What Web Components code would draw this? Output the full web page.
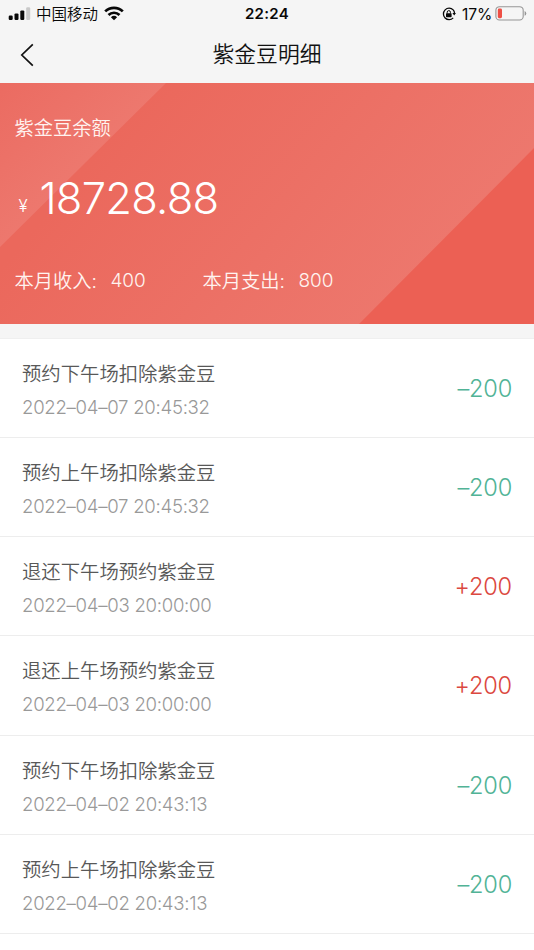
<!DOCTYPE html>
<html lang="zh-CN">
<head>
<meta charset="utf-8">
<title>紫金豆明细</title>
<style>
html, body { margin: 0; height: 100%; }
body { background: #fff; font-family: Inter, "Noto Sans CJK SC DemiLight", "Noto Sans CJK SC", sans-serif; overflow: hidden; }
</style>
</head>
<body>
<bean-page></bean-page>
<script>
const define = (name, html) => customElements.define(name, class extends HTMLElement {
  constructor() {
    super();
    this.attachShadow({ mode: 'open' }).innerHTML = html;
  }
});

define('status-bar', `
<style>
:host { display: grid; grid-template-columns: 1fr auto 1fr; align-items: center; height: 27px; color: #080808; font-size: 15px; line-height: 27px; }
.side { display: flex; align-items: center; height: 27px; }
.left { padding-left: 8px; }
.carrier { font-size: 15.5px; margin: 1px 6px 0 5px; }
.right { justify-content: flex-end; padding-right: 7px; }
.time { font-weight: 600; letter-spacing: .3px; }
.pct { margin: 1px 3px 0 6px; font-size: 15.6px; letter-spacing: -.2px; }
svg { display: block; flex: none; }
</style>
<div class="side left">
  <svg width="23" height="14" viewBox="0 0 23 14"><g fill="#080808"><rect x=".7" y="8.5" width="4" height="4.5" rx="1.2"/><rect x="6.5" y="6.4" width="4" height="6.6" rx="1.2"/><rect x="12.3" y="3.4" width="4" height="9.6" rx="1.2"/></g><rect x="18.2" y=".3" width="4" height="12.7" rx="1.2" fill="#c9c9c9"/></svg>
  <span class="carrier">中国移动</span>
  <svg width="20" height="15" viewBox="0 0 20 15"><g fill="none" stroke="#080808" stroke-width="2.7"><path d="M1.2 5.4a12.5 12.5 0 0 1 17.6 0"/><path d="M4.5 9a7.8 7.8 0 0 1 11 0"/></g><path d="M10 14.2 6.9 11.2a4.5 4.5 0 0 1 6.2 0z" fill="#080808"/></svg>
</div>
<span class="time">22:24</span>
<div class="side right">
  <svg width="14" height="14" viewBox="0 0 14 14"><path d="M11.2 2.9A5.7 5.7 0 1 0 11.2 10.9M11.2 2.9A5.7 5.7 0 0 1 12.5 6" fill="none" stroke="#080808" stroke-width="1.3"/><path d="M10.4 5.9h3.6l-1.8 2.7z" fill="#080808"/><rect x="4" y="6.2" width="5.6" height="4" rx=".6" fill="#080808"/><path d="M5.2 6.5V5.2a1.6 1.6 0 0 1 3.2 0v1.3" fill="none" stroke="#080808" stroke-width="1"/></svg>
  <span class="pct">17%</span>
  <svg width="32" height="15" viewBox="0 0 32 15"><rect x=".9" y=".7" width="27.3" height="13.3" rx="3.6" fill="none" stroke="#969696" stroke-width="1.1"/><rect x="2.8" y="2.6" width="4.2" height="9.6" rx="1.4" fill="#ee4f45"/><path d="M29.6 5v4.8q1.7-.6 1.7-2.4T29.6 5z" fill="#969696"/></svg>
</div>`);

define('nav-bar', `
<style>
:host { display: grid; grid-template-columns: 60px 1fr 60px; align-items: center; height: 56px; }
svg { display: block; margin-left: 20px; }
h1 { margin: 0; text-align: center; font-size: 21.8px; line-height: 54px; padding-bottom: 2px; font-weight: 400; color: #111; }
</style>
<svg width="14" height="24" viewBox="0 0 14 24"><path d="M12.8 1.3 1.8 12l11 10.7" fill="none" stroke="#111" stroke-width="1.7"/></svg>
<h1><slot></slot></h1>`);

define('balance-card', `
<style>
:host { display: grid; position: relative; height: 241px; color: #fff; background: #ec6054; overflow: hidden; }
.bg, .content { grid-area: 1 / 1; }
.bg { display: block; width: 100%; height: 241px; }
.content { display: flex; flex-direction: column; padding-left: 14.5px; color: #fff3f0; font-weight: 350; }
.label { margin-top: 30px; font-size: 19.3px; line-height: 30px; }
.amount { display: flex; align-items: baseline; margin-top: 25px; height: 60px; line-height: 60px; color: #fff; }
.yen { font-size: 17px; width: 25px; padding-left: 4px; box-sizing: border-box; position: relative; top: -2px; }
.num { font-size: 43.5px; letter-spacing: -.75px; }
.month { display: flex; margin-top: 38px; font-size: 19.3px; line-height: 30px; }
.item { display: flex; width: 188px; }
.item b { font-weight: 320; font-size: 19px; letter-spacing: -.1px; }
.cap { width: 96px; white-space: nowrap; }
</style>
<svg class="bg" viewBox="0 0 534 241" preserveAspectRatio="none">
  <defs>
    <linearGradient id="a" gradientUnits="userSpaceOnUse" x1="85" y1="85" x2="365" y2="319"><stop offset="0" stop-color="#eb685c"/><stop offset="1" stop-color="#ed796f"/></linearGradient>
    <linearGradient id="b" gradientUnits="userSpaceOnUse" x1="0" y1="0" x2="84" y2="84"><stop offset="0" stop-color="#eb6b61"/><stop offset="1" stop-color="#ed786e"/></linearGradient>
  </defs>
  <path d="M0 0H534V65L359 241H0z" fill="url(#a)"/>
  <path d="M0 0H166L0 164z" fill="url(#b)"/>
</svg>
<div class="content">
  <div class="label">紫金豆余额</div>
  <div class="amount"><span class="yen">¥</span><span class="num">18728.88</span></div>
  <div class="month">
    <div class="item"><span class="cap">本月收入:</span><b>400</b></div>
    <div class="item"><span class="cap">本月支出:</span><b>800</b></div>
  </div>
</div>`);

customElements.define('record-row', class extends HTMLElement {
  connectedCallback() {
    const root = this.attachShadow({ mode: 'open' });
    root.innerHTML = `
<style>
:host { display: flex; justify-content: space-between; align-items: center; box-sizing: border-box; height: 99.33px; padding: 2px 22px 0; border-bottom: 1px solid #ededed; background: #fff; }
:host(:first-child) { height: 98.6px; }
.title { font-size: 19.35px; line-height: 34px; color: #585858; font-weight: 350; padding-top: 3px; }
.date { font-size: 18.6px; line-height: 33px; color: #999; font-weight: 350; letter-spacing: -.28px; }
.sum { font-size: 23.6px; line-height: 34px; font-weight: 320; letter-spacing: -.2px; color: #51b396; }
.sum.in { color: #db4840; }
</style>
<div><div class="title"><slot></slot></div><div class="date"></div></div>
<div class="sum"></div>`;
    root.querySelector('.date').textContent = this.getAttribute('date');
    const sum = root.querySelector('.sum');
    sum.textContent = this.getAttribute('sum');
    sum.classList.toggle('in', sum.textContent.startsWith('+'));
  }
});

define('bean-page', `
<style>
:host { display: flex; flex-direction: column; width: 534px; height: 950px; overflow: hidden; background: #fff; }
header { background: #f5f5f5; }
.list { border-top: 14px solid #f5f5f5; }
.rows { border-top: 1px solid #efefef; }
</style>
<header><status-bar></status-bar><nav-bar>紫金豆明细</nav-bar></header>
<balance-card></balance-card>
<div class="list">
<div class="rows">
<record-row date="2022–04–07 20:45:32" sum="–200">预约下午场扣除紫金豆</record-row>
<record-row date="2022–04–07 20:45:32" sum="–200">预约上午场扣除紫金豆</record-row>
<record-row date="2022–04–03 20:00:00" sum="+200">退还下午场预约紫金豆</record-row>
<record-row date="2022–04–03 20:00:00" sum="+200">退还上午场预约紫金豆</record-row>
<record-row date="2022–04–02 20:43:13" sum="–200">预约下午场扣除紫金豆</record-row>
<record-row date="2022–04–02 20:43:13" sum="–200">预约上午场扣除紫金豆</record-row>
</div>
</div>`);
</script>
</body>
</html>
